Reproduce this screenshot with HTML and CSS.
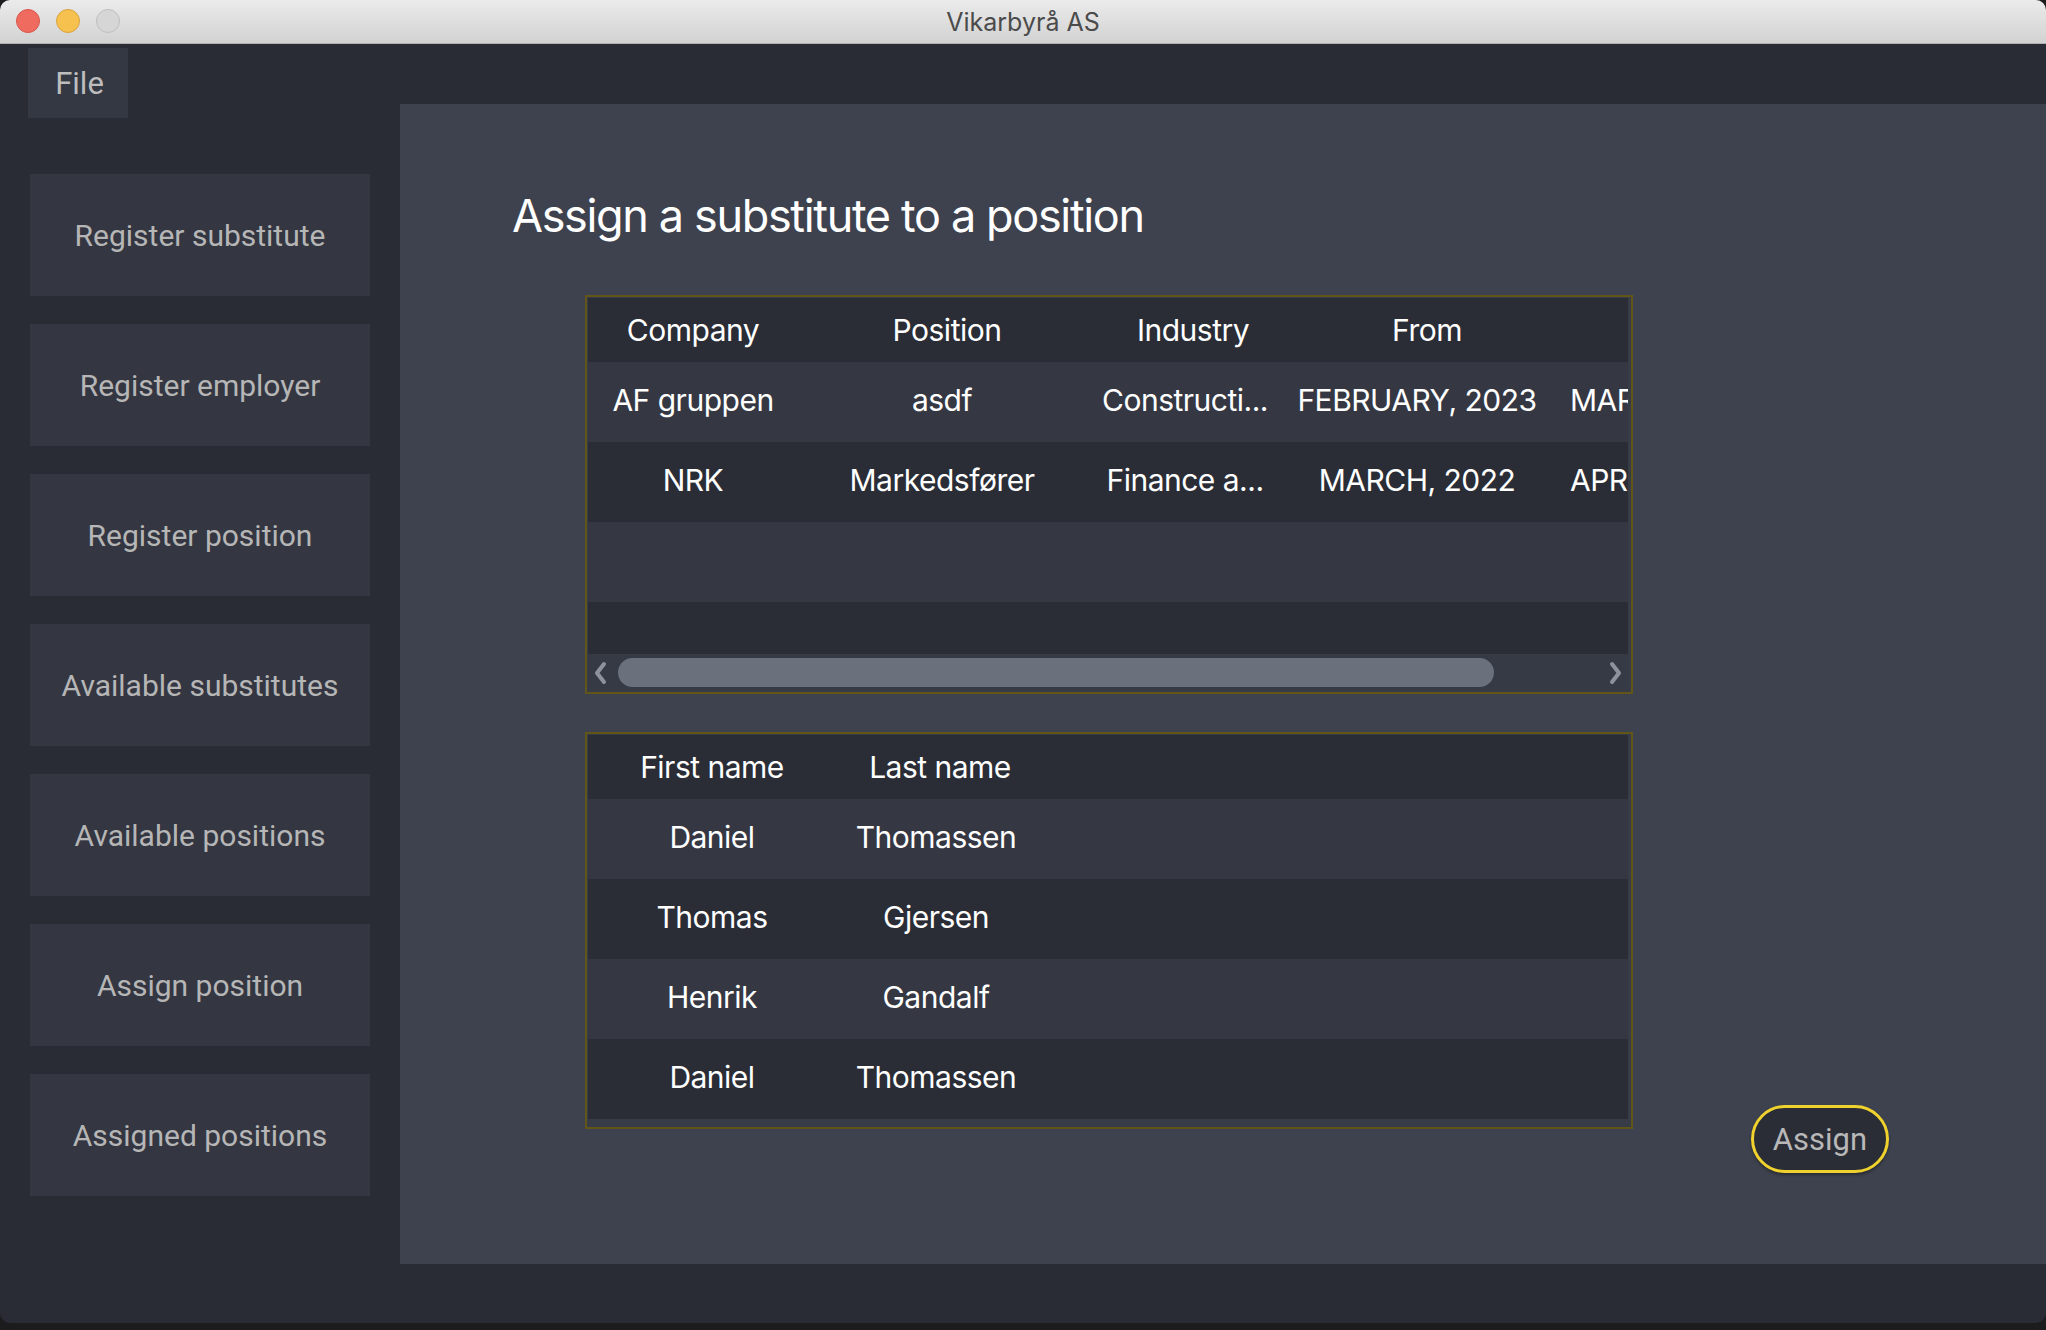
FILE: index.html
```html
<!DOCTYPE html>
<html lang="nb">
<head>
<meta charset="utf-8">
<title>Vikarbyrå AS</title>
<link rel="stylesheet" href="styles.css">
</head>
<body>
<div class="window">
  <header class="titlebar">
    <div class="lights">
      <span class="dot red"></span>
      <span class="dot yellow"></span>
      <span class="dot gray"></span>
    </div>
    <div class="wintitle">Vikarbyrå AS</div>
    <div></div>
  </header>
  <div class="main">
    <aside class="left">
      <div class="menu">File</div>
      <nav class="nav">
        <div class="navbtn">Register substitute</div>
        <div class="navbtn">Register employer</div>
        <div class="navbtn">Register position</div>
        <div class="navbtn">Available substitutes</div>
        <div class="navbtn">Available positions</div>
        <div class="navbtn">Assign position</div>
        <div class="navbtn">Assigned positions</div>
      </nav>
    </aside>
    <section class="right">
      <div class="panel">
        <h1 class="title">Assign a substitute to a position</h1>
        <div class="tables">
          <div class="table t1">
            <div class="row head">
              <div class="c c1">Company</div>
              <div class="c c2">Position</div>
              <div class="c c3">Industry</div>
              <div class="c c4">From</div>
              <div class="c c5"></div>
            </div>
            <div class="row odd">
              <div class="c c1">AF gruppen</div>
              <div class="c c2">asdf</div>
              <div class="c c3">Constructi...</div>
              <div class="c c4">FEBRUARY, 2023</div>
              <div class="c c5">MARCH, 2023</div>
            </div>
            <div class="row even">
              <div class="c c1">NRK</div>
              <div class="c c2">Markedsfører</div>
              <div class="c c3">Finance a...</div>
              <div class="c c4">MARCH, 2022</div>
              <div class="c c5">APRIL, 2022</div>
            </div>
            <div class="row odd"></div>
            <div class="row even short"></div>
            <div class="hscroll">
              <svg class="arrow" width="14" height="24" viewBox="0 0 14 24"><path d="M11 3 L4 12 L11 21" fill="none" stroke="#8e929c" stroke-width="4" stroke-linecap="round" stroke-linejoin="round"/></svg>
              <div class="track"><div class="thumb"></div></div>
              <svg class="arrow" width="14" height="24" viewBox="0 0 14 24"><path d="M3 3 L10 12 L3 21" fill="none" stroke="#8e929c" stroke-width="4" stroke-linecap="round" stroke-linejoin="round"/></svg>
            </div>
          </div>
          <div class="lower">
            <div class="table t2">
              <div class="row head">
                <div class="c d1">First name</div>
                <div class="c d2">Last name</div>
              </div>
              <div class="row odd">
                <div class="c d1">Daniel</div>
                <div class="c d2">Thomassen</div>
              </div>
              <div class="row even">
                <div class="c d1">Thomas</div>
                <div class="c d2">Gjersen</div>
              </div>
              <div class="row odd">
                <div class="c d1">Henrik</div>
                <div class="c d2">Gandalf</div>
              </div>
              <div class="row even">
                <div class="c d1">Daniel</div>
                <div class="c d2">Thomassen</div>
              </div>
              <div class="filler"></div>
            </div>
            <button class="assign">Assign</button>
          </div>
        </div>
      </div>
    </section>
  </div>
</div>
</body>
</html>
```
FILE: styles.css
```css
* { box-sizing: border-box; }
html, body { margin: 0; padding: 0; }
body {
  background: #1c1c1e;
  width: 2046px;
  height: 1330px;
  overflow: hidden;
}
.window {
  width: 2046px;
  height: 1323px;
  border-radius: 10px;
  overflow: hidden;
  display: flex;
  flex-direction: column;
  background: #292c35;
}
.titlebar {
  height: 44px;
  flex: none;
  display: grid;
  grid-template-columns: 1fr auto 1fr;
  align-items: center;
  background: linear-gradient(#ebebeb, #d2d2d2);
  border-bottom: 1px solid #b1b1b1;
}
.lights {
  display: flex;
  gap: 16px;
  padding-left: 16px;
  padding-bottom: 1px;
}
.dot {
  width: 24px;
  height: 24px;
  border-radius: 50%;
  display: block;
}
.red { background: #ef6b5f; border: 1px solid #d8554a; }
.yellow { background: #f6c14f; border: 1px solid #d9a33e; }
.gray { background: #d6d6d6; border: 1px solid #bebebe; }
.wintitle {
  font-family: "Inter", "Liberation Sans", sans-serif;
  font-size: 25px;
  color: #4b4b4b;
}
.main {
  flex: 1;
  display: flex;
}
.left {
  width: 400px;
  flex: none;
  padding-top: 4px;
}
.menu {
  margin-left: 28px;
  width: 100px;
  height: 70px;
  background: #343843;
  color: #bdbdbd;
  font-family: "Roboto", "Liberation Sans", sans-serif;
  font-size: 31px;
  padding-left: 3px;
  display: flex;
  align-items: center;
  justify-content: center;
}
.nav {
  margin-top: 56px;
  padding-left: 30px;
  display: flex;
  flex-direction: column;
  gap: 28px;
}
.navbtn {
  width: 340px;
  height: 122px;
  background: #343742;
  color: #b6b6b6;
  font-family: "Roboto", "Liberation Sans", sans-serif;
  font-size: 30px;
  display: flex;
  align-items: center;
  justify-content: center;
}
.right {
  flex: 1;
  padding-top: 60px;
  padding-bottom: 59px;
  display: flex;
  min-width: 0;
}
.panel {
  flex: 1;
  background: #3e424e;
  padding-top: 82px;
  padding-left: 112px;
}
.title {
  margin: 0;
  font-family: "Inter", "Liberation Sans", sans-serif;
  font-weight: 400;
  font-size: 45px;
  line-height: 60px;
  color: #ffffff;
  letter-spacing: -1.35px;
}
.tables {
  margin-left: 73px;
  margin-top: 49px;
}
.table {
  width: 1048px;
  border: 2px solid #625518;
  padding: 1px 3px 1px 1px;
  background: #383c47;
  font-family: "Inter", "Liberation Sans", sans-serif;
  font-size: 30px;
  letter-spacing: -0.5px;
  color: #ffffff;
}
.row {
  height: 80px;
  display: flex;
  align-items: center;
  overflow: hidden;
  padding-bottom: 5px;
}
.row.head { height: 64px; background: #2a2d36; padding-bottom: 0; }
.row.odd { background: #353843; }
.row.even { background: #2a2d36; }
.row.short { height: 52px; }
.c {
  flex: none;
  text-align: center;
  white-space: nowrap;
  overflow: hidden;
}
.c1 { width: 210px; }
.c2 { width: 288px; }
.c3 { width: 198px; }
.c4 { width: 266px; }
.c5 { width: 80px; text-align: left; padding-left: 20px; }
.head .c2 { padding-left: 10px; }
.head .c3 { padding-left: 16px; }
.head .c4 { padding-left: 20px; }
.d1 { width: 248px; }
.d2 { width: 200px; }
.head .d2 { padding-left: 8px; }
.hscroll {
  height: 37px;
  background: #363a45;
  display: flex;
  align-items: center;
  padding: 0 5px 0 5px;
  gap: 11px;
}
.arrow { flex: none; }
.track {
  flex: 1;
  height: 29px;
}
.thumb {
  width: 876px;
  height: 29px;
  border-radius: 15px;
  background: #6b707d;
}
.lower {
  display: flex;
  align-items: flex-start;
  margin-top: 38px;
}
.filler { height: 7px; }
.assign {
  margin-left: 118px;
  margin-top: 373px;
  width: 138px;
  height: 68px;
  border-radius: 34px;
  border: 3px solid #f0d22f;
  background: #2a2d36;
  color: #b8b8b8;
  font-family: "Roboto", "Liberation Sans", sans-serif;
  font-size: 31px;
  padding: 0;
  box-shadow: 0 2px 3px rgba(0,0,0,0.35);
}
```
